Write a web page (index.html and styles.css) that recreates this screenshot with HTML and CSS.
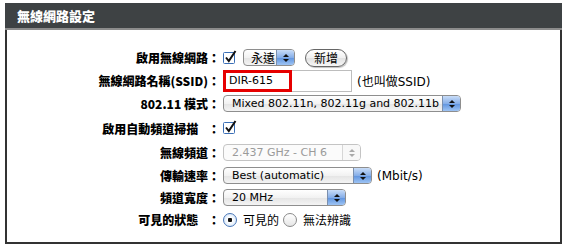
FILE: index.html
```html
<!DOCTYPE html>
<html>
<head>
<meta charset="utf-8">
<link rel="stylesheet" href="styles.css">
</head>
<body>
<div class="panel">
  <div class="header">無線網路設定</div>
  <div class="form">
    <div class="row">
      <div class="label">啟用無線網路：</div>
      <div class="ctl">
        <span class="check"><svg width="14" height="14" viewBox="0 0 14 14"><rect x="0.5" y="2.5" width="11" height="11" rx="1" fill="#fff" stroke="#3b6fb6"/><path d="M3 7.5 L5.8 11 L12.5 1" fill="none" stroke="#111" stroke-width="2"/></svg></span>
        <span class="select sel-always"><span class="val">永遠</span><span class="arrows"><i class="up"></i><i class="dn"></i></span></span>
        <span class="btn">新增</span>
      </div>
    </div>
    <div class="row">
      <div class="label">無線網路名稱(SSID)：</div>
      <div class="ctl">
        <span class="input"><span class="redbox">DIR-615</span></span>
        <span class="note">(也叫做SSID)</span>
      </div>
    </div>
    <div class="row">
      <div class="label">802.11 模式：</div>
      <div class="ctl">
        <span class="select sel-mode"><span class="val">Mixed 802.11n, 802.11g and 802.11b</span><span class="arrows"><i class="up"></i><i class="dn"></i></span></span>
      </div>
    </div>
    <div class="row tall">
      <div class="label wide">啟用自動頻道掃描 ：</div>
      <div class="ctl">
        <span class="check"><svg width="14" height="14" viewBox="0 0 14 14"><rect x="0.5" y="2.5" width="11" height="11" rx="1" fill="#fff" stroke="#3b6fb6"/><path d="M3 7.5 L5.8 11 L12.5 1" fill="none" stroke="#111" stroke-width="2"/></svg></span>
      </div>
    </div>
    <div class="row">
      <div class="label">無線頻道：</div>
      <div class="ctl">
        <span class="select disabled sel-ch"><span class="val">2.437 GHz - CH 6</span><span class="arrows"><i class="up"></i><i class="dn"></i></span></span>
      </div>
    </div>
    <div class="row">
      <div class="label">傳輸速率：</div>
      <div class="ctl">
        <span class="select sel-rate"><span class="val">Best (automatic)</span><span class="arrows"><i class="up"></i><i class="dn"></i></span></span>
        <span class="note">(Mbit/s)</span>
      </div>
    </div>
    <div class="row short">
      <div class="label">頻道寬度：</div>
      <div class="ctl">
        <span class="select sel-width"><span class="val">20 MHz</span><span class="arrows"><i class="up"></i><i class="dn"></i></span></span>
      </div>
    </div>
    <div class="row">
      <div class="label wide">可見的狀態 ：</div>
      <div class="ctl">
        <span class="radio on"></span><span class="rtext">可見的</span>
        <span class="radio"></span><span class="rtext">無法辨識</span>
      </div>
    </div>
  </div>
</div>
</body>
</html>
```
FILE: styles.css
```css
html, body {
  margin: 0;
  padding: 0;
  background: #fff;
}
body {
  font-family: "DejaVu Sans", "Noto Sans CJK TC", sans-serif;
  font-size: 11px;
  color: #000;
}
.panel {
  margin: 3px 3px 0 5px;
  width: 553px;
  height: 239px;
  border: 2px solid #333;
  border-top: none;
  box-sizing: content-box;
}
.header {
  height: 25px;
  background: #3e4244;
  border-bottom: 2px solid #8c8c8c;
  margin: 0 -2px;
  padding-left: 12px;
  color: #fff;
  font-family: "Noto Sans CJK TC", sans-serif;
  font-weight: 900;
  font-size: 13px;
  line-height: 26px;
}
.form {
  padding-top: 16px;
}
.row {
  display: grid;
  grid-template-columns: 214px 1fr;
  height: 23px;
  align-items: center;
}
.row.tall {
  height: 26px;
}
.row.short {
  height: 21px;
}
.label {
  text-align: right;
  font-family: "Noto Sans CJK TC", sans-serif;
  font-weight: 900;
  font-size: 12px;
  white-space: nowrap;
  padding-right: 1px;
}
.label.wide {
  word-spacing: 7px;
}
.ctl {
  display: flex;
  align-items: center;
  padding-left: 2px;
  white-space: nowrap;
}
.check {
  display: inline-flex;
  width: 14px;
  height: 14px;
  margin-right: 6px;
  margin-top: -2px;
}
.select {
  position: relative;
  display: inline-flex;
  align-items: center;
  height: 15px;
  border: 1px solid #8e8e8e;
  border-radius: 4px;
  background: linear-gradient(#ffffff, #f2f2f2 50%, #e4e4e4 51%, #f4f4f4);
  box-sizing: content-box;
  overflow: hidden;
  font-family: "DejaVu Sans", "Noto Sans CJK TC", sans-serif;
  font-size: 11px;
}
.select .val {
  flex: 1;
  padding-left: 8px;
  line-height: 15px;
}
.select .arrows {
  width: 17px;
  height: 15px;
  border-left: 1px solid #7a8fae;
  background: linear-gradient(#c9ddf8, #86aee8 50%, #5d92de 51%, #9ec4f4);
  display: flex;
  flex-direction: column;
  align-items: center;
  justify-content: center;
  gap: 2px;
}
.arrows i {
  width: 0;
  height: 0;
  border-left: 3px solid transparent;
  border-right: 3px solid transparent;
}
.arrows .up { border-bottom: 3px solid #111; }
.arrows .dn { border-top: 3px solid #111; }
.select.disabled {
  border-color: #c4c4c4;
  color: #9a9a9a;
  background: #fbfbfb;
}
.select.disabled .arrows {
  background: #f8f8f8;
  border-left-color: #d6d6d6;
}
.select.disabled .arrows .up { border-bottom-color: #aaa; }
.select.disabled .arrows .dn { border-top-color: #aaa; }
.sel-always { width: 50px; }
.sel-always .val { font-family: "Noto Sans CJK TC", sans-serif; font-size: 12px; padding-left: 7px; }
.sel-mode { width: 236px; }
.sel-ch { width: 136px; }
.sel-rate { width: 147px; }
.sel-width { width: 121px; }
.btn {
  margin-left: 10px;
  height: 16px;
  padding: 0 8px;
  border: 1px solid #666;
  border-radius: 9px;
  background: linear-gradient(#ffffff, #f0f0f0 50%, #e2e2e2 51%, #f6f6f6);
  font-family: "Noto Sans CJK TC", sans-serif;
  font-size: 12px;
  line-height: 16px;
  box-shadow: 1px 1px 1px rgba(0,0,0,0.25);
}
.input {
  display: inline-block;
  width: 127px;
  height: 20px;
  border: 1px solid #bdbdbd;
  background: #fff;
  position: relative;
  margin-top: 1px;
}
.redbox {
  position: absolute;
  left: -1px;
  top: -1px;
  width: 60px;
  height: 16px;
  border: 3px solid #e60000;
  padding-left: 3px;
  line-height: 16px;
  font-family: "DejaVu Sans", sans-serif;
  font-size: 11px;
}
.note {
  margin-left: 5px;
  font-family: "DejaVu Sans", "Noto Sans CJK TC", sans-serif;
  font-size: 12px;
}
.radio {
  display: inline-block;
  width: 12px;
  height: 12px;
  border: 1px solid #8a8a8a;
  border-radius: 50%;
  background: linear-gradient(#fff, #e6e6e6);
  box-sizing: content-box;
  position: relative;
}
.radio.on {
  border-color: #4b78b8;
  background: radial-gradient(circle, #111 0 2px, #fff 2.5px, #c6dcf6 100%);
}
.rtext {
  margin-left: 6px;
  margin-right: 4px;
  font-family: "Noto Sans CJK TC", sans-serif;
  font-size: 12px;
}
```
